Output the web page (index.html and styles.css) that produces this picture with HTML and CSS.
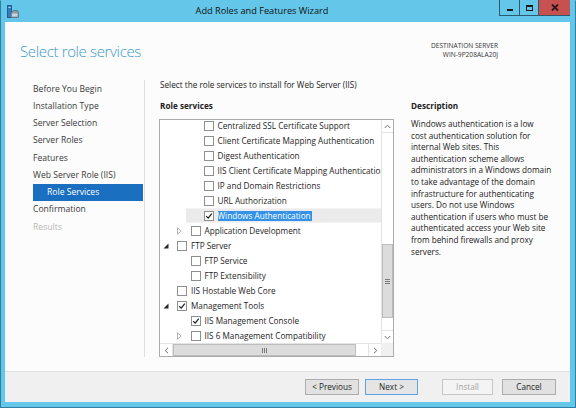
FILE: index.html
```html
<!DOCTYPE html>
<html>
<head>
<meta charset="utf-8">
<link rel="stylesheet" href="styles.css">
</head>
<body>
<div class="window">
  <div class="titlebar">
    <svg class="app-icon" width="12" height="14" viewBox="0 0 12 14">
      <rect x="0.5" y="0.5" width="4" height="12" fill="#2d7fc0" stroke="#1d5f95"/>
      <rect x="1.5" y="2" width="2" height="1" fill="#bfe3f7"/>
      <path d="M4 8 L6.5 5.5 L10.5 5.5 L11.5 8 L11.5 12.5 L4 12.5 Z" fill="#8a9aa6" stroke="#5f6e79" stroke-width="0.8"/>
      <rect x="5" y="8.5" width="5.5" height="3" fill="#c9d3da"/>
    </svg>
    <div class="title">Add Roles and Features Wizard</div>
    <div class="caption-buttons">
      <div class="cbtn min"><span class="min-glyph"></span></div>
      <div class="cbtn max"><span class="max-glyph"></span></div>
      <div class="cbtn close"><svg width="8" height="7" viewBox="0 0 8 7"><path d="M1 0.5 L7 6.5 M7 0.5 L1 6.5" stroke="#2a1a1a" stroke-width="1.8"/></svg></div>
    </div>
  </div>
  <div class="client">
    <div class="header">
      <div class="page-title">Select role services</div>
      <div class="dest">
        <div>DESTINATION SERVER</div>
        <div>WIN-9P208ALA20J</div>
      </div>
    </div>
    <div class="main">
      <nav class="nav">
        <div class="nav-item">Before You Begin</div>
        <div class="nav-item">Installation Type</div>
        <div class="nav-item">Server Selection</div>
        <div class="nav-item">Server Roles</div>
        <div class="nav-item">Features</div>
        <div class="nav-item">Web Server Role (IIS)</div>
        <div class="nav-item sub active">Role Services</div>
        <div class="nav-item">Confirmation</div>
        <div class="nav-item disabled">Results</div>
      </nav>
      <div class="content">
        <div class="intro">Select the role services to install for Web Server (IIS)</div>
        <div class="columns">
          <div class="left-col">
            <div class="heading">Role services</div>
            <div class="listbox">
              <div class="tree">
                <div class="row l2"><div class="item"><span class="exp"></span><span class="cb"></span><span class="label">Centralized SSL Certificate Support</span></div></div>
                <div class="row l2"><div class="item"><span class="exp"></span><span class="cb"></span><span class="label">Client Certificate Mapping Authentication</span></div></div>
                <div class="row l2"><div class="item"><span class="exp"></span><span class="cb"></span><span class="label">Digest Authentication</span></div></div>
                <div class="row l2"><div class="item"><span class="exp"></span><span class="cb"></span><span class="label">IIS Client Certificate Mapping Authentication</span></div></div>
                <div class="row l2"><div class="item"><span class="exp"></span><span class="cb"></span><span class="label">IP and Domain Restrictions</span></div></div>
                <div class="row l2"><div class="item"><span class="exp"></span><span class="cb"></span><span class="label">URL Authorization</span></div></div>
                <div class="row l2"><div class="item selected"><span class="exp"></span><span class="cb checked"><svg width="8" height="8" viewBox="0 0 8 8"><path d="M1.2 4.2 L3.2 6.2 L6.8 1.6" fill="none" stroke="#1a1a1a" stroke-width="1.2"/></svg></span><span class="label hl">Windows Authentication</span></div></div>
                <div class="row l1"><div class="item"><span class="exp"><svg width="5" height="8" viewBox="0 0 5 8"><path d="M0.5 0.8 L4.2 4 L0.5 7.2 Z" fill="none" stroke="#a8a8a8" stroke-width="0.9"/></svg></span><span class="cb"></span><span class="label">Application Development</span></div></div>
                <div class="row l0"><div class="item"><span class="exp"><svg width="6" height="6" viewBox="0 0 6 6"><path d="M5.5 0.5 L5.5 5.5 L0.5 5.5 Z" fill="#262626"/></svg></span><span class="cb"></span><span class="label">FTP Server</span></div></div>
                <div class="row l1"><div class="item"><span class="exp"></span><span class="cb"></span><span class="label">FTP Service</span></div></div>
                <div class="row l1"><div class="item"><span class="exp"></span><span class="cb"></span><span class="label">FTP Extensibility</span></div></div>
                <div class="row l0"><div class="item"><span class="exp"></span><span class="cb"></span><span class="label">IIS Hostable Web Core</span></div></div>
                <div class="row l0"><div class="item"><span class="exp"><svg width="6" height="6" viewBox="0 0 6 6"><path d="M5.5 0.5 L5.5 5.5 L0.5 5.5 Z" fill="#262626"/></svg></span><span class="cb checked"><svg width="8" height="8" viewBox="0 0 8 8"><path d="M1.2 4.2 L3.2 6.2 L6.8 1.6" fill="none" stroke="#1a1a1a" stroke-width="1.2"/></svg></span><span class="label">Management Tools</span></div></div>
                <div class="row l1"><div class="item"><span class="exp"></span><span class="cb checked"><svg width="8" height="8" viewBox="0 0 8 8"><path d="M1.2 4.2 L3.2 6.2 L6.8 1.6" fill="none" stroke="#1a1a1a" stroke-width="1.2"/></svg></span><span class="label">IIS Management Console</span></div></div>
                <div class="row l1"><div class="item"><span class="exp"><svg width="5" height="8" viewBox="0 0 5 8"><path d="M0.5 0.8 L4.2 4 L0.5 7.2 Z" fill="none" stroke="#a8a8a8" stroke-width="0.9"/></svg></span><span class="cb"></span><span class="label">IIS 6 Management Compatibility</span></div></div>
              </div>
              <div class="vscroll">
                <div class="sb-btn"><svg width="7" height="5" viewBox="0 0 7 5"><path d="M0.8 4 L3.5 1.2 L6.2 4" fill="none" stroke="#707070" stroke-width="1"/></svg></div>
                <div class="vtrack"><div class="vthumb"><span class="grip-v"></span></div></div>
                <div class="sb-btn"><svg width="7" height="5" viewBox="0 0 7 5"><path d="M0.8 1 L3.5 3.8 L6.2 1" fill="none" stroke="#707070" stroke-width="1"/></svg></div>
              </div>
              <div class="hscroll">
                <div class="sb-btn"><svg width="5" height="7" viewBox="0 0 5 7"><path d="M4 0.8 L1.2 3.5 L4 6.2" fill="none" stroke="#707070" stroke-width="1"/></svg></div>
                <div class="htrack"><div class="hthumb"><span class="grip-h"></span></div></div>
                <div class="sb-btn"><svg width="5" height="7" viewBox="0 0 5 7"><path d="M1 0.8 L3.8 3.5 L1 6.2" fill="none" stroke="#707070" stroke-width="1"/></svg></div>
              </div>
              <div class="corner"></div>
            </div>
          </div>
          <div class="right-col">
            <div class="heading">Description</div>
            <p class="desc">Windows authentication is a low<br>cost authentication solution for<br>internal Web sites. This<br>authentication scheme allows<br>administrators in a Windows domain<br>to take advantage of the domain<br>infrastructure for authenticating<br>users. Do not use Windows<br>authentication if users who must be<br>authenticated access your Web site<br>from behind firewalls and proxy<br>servers.</p>
          </div>
        </div>
      </div>
    </div>
    <div class="footer">
      <button class="btn prev">&lt; Previous</button>
      <button class="btn focus">Next &gt;</button>
      <button class="btn disabled install">Install</button>
      <button class="btn cancel">Cancel</button>
    </div>
  </div>
</div>
</body>
</html>
```
FILE: styles.css
```css
* { box-sizing: border-box; }
html, body { margin: 0; padding: 0; }
body {
  width: 576px;
  height: 408px;
  overflow: hidden;
  font-family: "Open Sans", "Noto Sans", sans-serif;
  color: #1e1e1e;
}
.window {
  width: 576px;
  height: 408px;
  background: #64c7ea;
  border: 1px solid #2f7fa3;
  border-top-color: #64c7ea;
  display: flex;
  flex-direction: column;
}
.titlebar {
  height: 21px;
  display: flex;
  align-items: flex-start;
  position: relative;
}
.app-icon {
  margin: 4px 0 0 6px;
}
.title {
  position: absolute;
  left: 0;
  top: 3px;
  width: 522px;
  text-align: center;
  font-size: 9.2px;
  line-height: 14px;
  color: #111;
}
.caption-buttons {
  margin-left: auto;
  margin-right: 5px;
  margin-top: -1px;
  display: flex;
  height: 16px;
  border-left: 1px solid #2c5a6e;
  border-bottom: 1px solid #2c5a6e;
}
.cbtn {
  height: 15px;
  display: flex;
  align-items: center;
  justify-content: center;
  border-right: 1px solid #2c5a6e;
}
.cbtn.min { width: 20px; }
.cbtn.max { width: 19px; }
.cbtn.close { width: 31px; background: #c75050; border-right: 0; }
.min-glyph {
  width: 6px;
  height: 2px;
  background: #1a1a1a;
  margin-top: 5px;
}
.max-glyph {
  width: 7px;
  height: 6px;
  border: 1px solid #1a1a1a;
  border-top-width: 2px;
}
.client {
  margin: 0 5px 5px 4px;
  flex: 1;
  background: #fcfcfc;
  display: flex;
  flex-direction: column;
}
.header {
  height: 58px;
  display: flex;
  justify-content: space-between;
  padding: 18px 72px 0 15px;
}
.page-title {
  font-size: 15px;
  font-weight: 300;
  letter-spacing: -0.35px;
  line-height: 22px;
  color: #3a9ac8;
}
.dest {
  font-size: 6.6px;
  line-height: 9px;
  text-align: right;
  color: #333;
  padding-top: 1px;
}
.main {
  height: 277px;
  display: flex;
}
.nav {
  width: 140px;
  padding: 0.5px 1px 0 28px;
  border-right: 1px solid #dedede;
}
.nav-item {
  font-size: 8.6px;
  line-height: 17.25px;
  height: 17.25px;
  color: #3a3a3a;
  white-space: nowrap;
}
.nav-item.sub { padding-left: 14px; }
.nav-item.active { background: #1a6fc0; color: #fff; }
.nav-item.disabled { color: #b8b8b8; }
.content {
  flex: 1;
  padding-left: 15px;
  display: flex;
  flex-direction: column;
}
.intro {
  font-size: 8.2px;
  line-height: 10px;
  color: #222;
  margin-top: 0;
}
.columns {
  display: flex;
  margin-top: 10px;
  flex: 1;
}
.heading {
  font-size: 8.2px;
  font-weight: 700;
  line-height: 12px;
  color: #222;
}
.left-col {
  width: 235px;
  margin-left: -1px;
  display: flex;
  flex-direction: column;
}
.left-col .heading { padding-left: 1px; }
.listbox {
  margin-top: 7px;
  height: 238px;
  border: 1px solid #acacac;
  background: #fff;
  display: grid;
  grid-template-columns: 221px 12px;
  grid-template-rows: 223px 13px;
}
.tree {
  overflow: hidden;
}
.row {
  height: 15px;
  display: flex;
  white-space: nowrap;
}
.tree .row:first-child { margin-top: -2px; }
.row.l0 { padding-left: 0; }
.row.l1 { padding-left: 13.5px; }
.row.l2 { padding-left: 26px; }
.item {
  flex: 1;
  display: flex;
  align-items: center;
  height: 15px;
}
.item.selected {
  background: #ebebeb;
  border-top: 1px solid #f3f3f3;
  border-bottom: 1px solid #f3f3f3;
}
.exp {
  width: 17px;
  height: 15px;
  flex: none;
  display: flex;
  align-items: center;
  padding-left: 3px;
}
.row.l2 .exp { width: 17.5px; }
.cb {
  width: 10px;
  height: 10px;
  flex: none;
  border: 1px solid #8e8f8f;
  background: #fff;
  margin-right: 4px;
  display: flex;
  align-items: center;
  justify-content: center;
}
.label {
  font-size: 8.2px;
  line-height: 11px;
  color: #1e1e1e;
}
.label.hl {
  background: #3391e8;
  color: #fff;
  padding: 0 1px 0 0;
  line-height: 10px;
}
.vscroll {
  grid-column: 2;
  grid-row: 1;
  display: flex;
  flex-direction: column;
  border-left: 1px solid #e3e3e3;
  background: #fff;
}
.sb-btn {
  flex: none;
  display: flex;
  align-items: center;
  justify-content: center;
}
.vscroll .sb-btn { height: 12px; }
.vtrack {
  flex: 1;
  border-top: 1px solid #e3e3e3;
  border-bottom: 1px solid #e3e3e3;
  padding-top: 111px;
}
.vthumb {
  height: 74px;
  background: #dcdcdc;
  border: 1px solid #bcbcbc;
  display: flex;
  align-items: center;
  justify-content: center;
}
.grip-v {
  width: 5px;
  height: 5px;
  background: repeating-linear-gradient(to bottom, #7a7a7a 0 1px, transparent 1px 2px);
}
.hscroll {
  grid-column: 1;
  grid-row: 2;
  display: flex;
  border-top: 1px solid #e3e3e3;
  background: #fff;
}
.hscroll .sb-btn { width: 12px; }
.htrack {
  flex: 1;
  border-left: 1px solid #e3e3e3;
  border-right: 1px solid #e3e3e3;
  padding-right: 12px;
}
.hthumb {
  height: 100%;
  background: #dcdcdc;
  border: 1px solid #bcbcbc;
  display: flex;
  align-items: center;
  justify-content: center;
}
.grip-h {
  width: 5px;
  height: 5px;
  background: repeating-linear-gradient(to right, #7a7a7a 0 1px, transparent 1px 2px);
}
.corner {
  grid-column: 2;
  grid-row: 2;
  background: #f0f0f0;
}
.right-col {
  margin-left: 17px;
  width: 150px;
}
.desc {
  margin: 6px 0 0;
  font-size: 8.2px;
  line-height: 11.6px;
  color: #222;
  white-space: nowrap;
}
.footer {
  margin-top: auto;
  height: 31px;
  background: #f0f0f0;
  border-top: 1px solid #dfdfdf;
  display: flex;
  justify-content: flex-end;
  align-items: flex-start;
  padding: 7px 14px 0 0;
}
.btn {
  width: 54px;
  height: 16px;
  padding: 0;
  font-family: inherit;
  font-size: 8.2px;
  line-height: 14px;
  color: #1e1e1e;
  background: #e1e1e1;
  border: 1px solid #adadad;
  border-radius: 0;
}
.btn.focus { width: 53px; margin-left: 6px; border-color: #5fa3e6; background: #e5e5e5; }
.btn.install { width: 51px; margin-left: 24px; color: #a3a3a3; background: #f4f4f4; border-color: #c7c7c7; }
.btn.cancel { margin-left: 9px; }
```
